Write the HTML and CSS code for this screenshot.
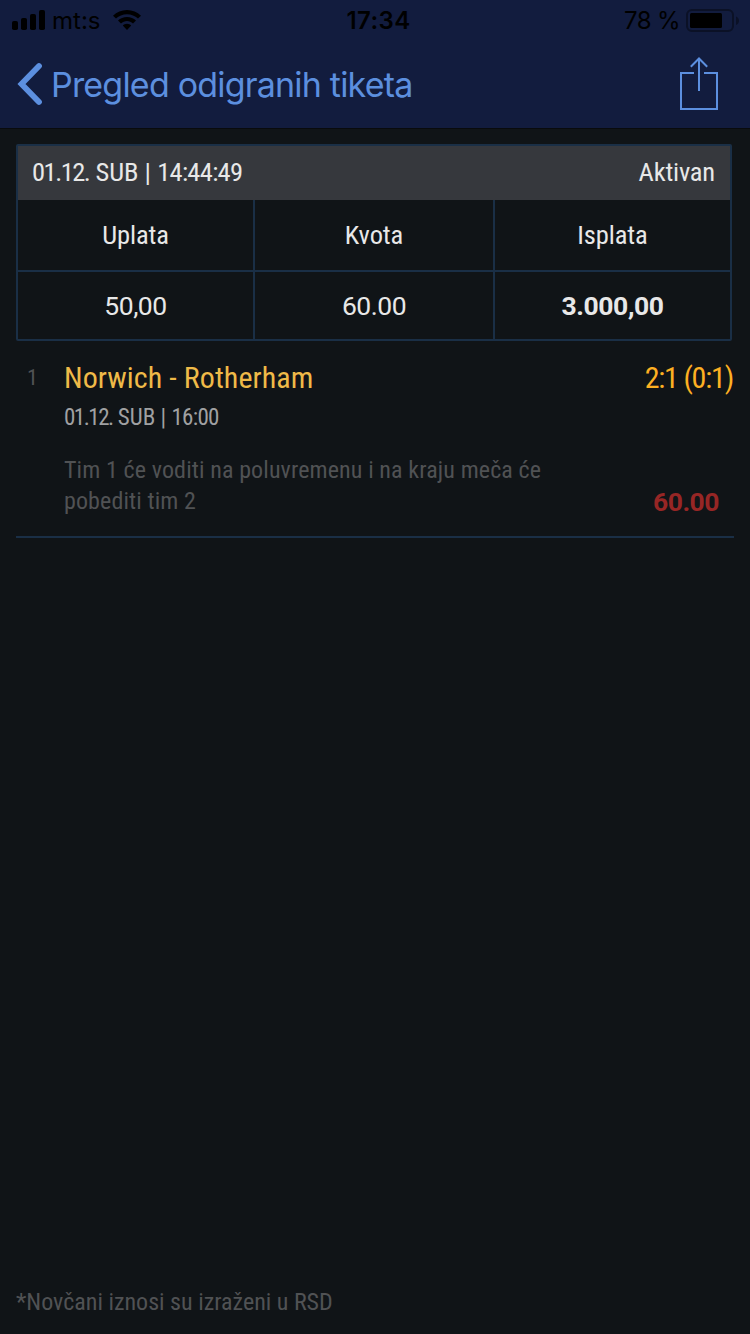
FILE: index.html
```html
<!DOCTYPE html>
<html lang="sr">
<head>
<meta charset="utf-8">
<title>Pregled odigranih tiketa</title>
<link rel="stylesheet" href="styles.css">
</head>
<body>
<div class="screen">
  <header class="topbar">
    <div class="status">
      <div class="status-left">
        <svg class="signal" width="34" height="22" viewBox="0 0 34 22"><rect x="0" y="12" width="6" height="9" rx="1.8"/><rect x="9" y="9" width="6" height="12" rx="1.8"/><rect x="18" y="5" width="6" height="16" rx="1.8"/><rect x="27" y="1" width="6" height="20" rx="1.8"/></svg>
        <span class="carrier">mt:s</span>
        <svg class="wifi" width="28" height="20" viewBox="0 0 28 20"><path d="M14 0C8.600 0 3.700 2.200 0 5.700L3 8.600C5.900 5.900 9.700 4.200 14 4.200S22.100 5.900 25 8.600L28 5.700C24.300 2.200 19.400 0 14 0Z"/><path d="M14 7C10.500 7 7.300 8.400 5 10.600L8 13.500C9.600 12 11.700 11.100 14 11.100S18.400 12 20 13.500L23 10.600C20.700 8.400 17.500 7 14 7Z"/><path d="M14 13.800C12.200 13.800 10.900 14.500 9.800 15.500L14 20L18.200 15.500C17.100 14.500 15.800 13.800 14 13.800Z"/></svg>
      </div>
      <span class="clock">17:34</span>
      <div class="status-right">
        <span class="percent">78 %</span>
        <svg class="battery" width="54" height="24" viewBox="0 0 54 24"><rect x="1" y="1" width="46" height="21" rx="5" fill="none" stroke="#0b1126" stroke-width="2"/><rect x="4" y="4" width="32" height="15" rx="1.500"/><path d="M50 7.500C54 9 54 14.500 50 16Z" fill="#0b1126"/></svg>
      </div>
    </div>
    <nav class="nav">
      <a class="back">
        <svg class="chevron" width="26" height="44" viewBox="0 0 26 44"><path d="M22 4L4.500 22L22 40" fill="none" stroke="#5c8fdf" stroke-width="5.800" stroke-linecap="round" stroke-linejoin="miter"/></svg>
        <span class="title">Pregled odigranih tiketa</span>
      </a>
      <svg class="share" width="40" height="54" viewBox="0 0 40 54"><path d="M15 16H2V52H38V16H25M20 34V2.500M11.800 9.700L20 1.500L28.200 9.700" fill="none" stroke="#5c8fdf" stroke-width="2"/></svg>
    </nav>
  </header>

  <main class="content">
    <section class="ticket">
      <div class="ticket-head"><span class="stamp"><span class="day">01.12.</span> SUB | <span class="time">14:44:49</span></span><span class="state">Aktivan</span></div>
      <div class="grid">
        <div class="cell label">Uplata</div>
        <div class="cell label">Kvota</div>
        <div class="cell label">Isplata</div>
        <div class="cell">50,00</div>
        <div class="cell">60.00</div>
        <div class="cell payout">3.000,00</div>
      </div>
    </section>

    <section class="match">
      <span class="index">1</span>
      <div class="match-body">
        <div class="match-row"><span class="teams">Norwich - Rotherham</span><span class="score">2:1 (0:1)</span></div>
        <div class="kickoff"><span class="day">01.12.</span> SUB | <span class="time">16:00</span></div>
        <div class="bet-row">
          <p class="bet">Tim 1 će voditi na poluvremenu i na kraju meča će<br>pobediti tim 2</p>
          <span class="odds">60.00</span>
        </div>
      </div>
    </section>
  </main>

  <footer class="note">*Novčani iznosi su izraženi u RSD</footer>
</div>
</body>
</html>
```

FILE: styles.css
```css
* { box-sizing: border-box; }

body {
  margin: 0;
  background: #101417;
  color: #e8e8e8;
  font-family: Roboto, "Liberation Sans", sans-serif;
  font-size: 26.5px;
  font-stretch: 75%;
}

.screen {
  display: flex;
  flex-direction: column;
  width: 750px;
  height: 1334px;
}

.topbar {
  height: 129px;
  background: #121c3e;
  border-bottom: 1px solid #090b0d;
  font-family: Inter, "Liberation Sans", sans-serif;
  font-stretch: normal;
}

.status {
  display: grid;
  grid-template-columns: 1fr auto 1fr;
  align-items: center;
  height: 40px;
  padding: 1px 10px 0 12px;
  color: #000;
  font-size: 24px;
}

.status-left, .status-right { display: flex; align-items: center; }
.status-right { justify-content: flex-end; }
.signal { margin-top: -2px; }
.carrier { margin-left: 6px; }
.wifi { margin: -1px 0 0 13px; }
.clock { padding-left: 5px; font-weight: 600; letter-spacing: 0.4px; }
.percent { margin-right: 6px; letter-spacing: -0.6px; }

.nav {
  display: flex;
  justify-content: space-between;
  align-items: center;
  height: 88px;
  padding: 0 31px 0 17px;
}

.back { display: flex; align-items: center; gap: 8px; }
.title { color: #5c8fdf; font-size: 34px; letter-spacing: -0.8px; }

.content { flex: 1; padding: 15px 16px 0; }

.ticket {
  width: 716px;
  border: 2px solid #1a2f46;
  border-radius: 2px;
}

.ticket-head {
  display: flex;
  justify-content: space-between;
  height: 54px;
  padding: 0 15px 0 14px;
  background: #36383d;
  line-height: 52px;
}

.day { letter-spacing: -1.5px; }
.time { letter-spacing: -0.7px; }
.state { letter-spacing: -0.2px; }

.grid {
  display: grid;
  grid-template-columns: 235px 238px 235px;
  grid-template-rows: 70px 67px;
  gap: 2px;
  background: #1a2f46;
}

.cell {
  background: #101417;
  font-stretch: 100%;
  letter-spacing: -0.5px;
  line-height: 68px;
  text-align: center;
}
.label { font-stretch: 75%; letter-spacing: -0.1px; line-height: 70px; }
.payout { font-weight: 700; letter-spacing: -0.4px; }

.match {
  display: flex;
  width: 718px;
  height: 197px;
  padding-top: 16px;
  border-bottom: 2px solid #1a2f46;
}

.index { width: 48px; padding-left: 11px; color: #505254; font-size: 22px; line-height: 42px; }
.match-body { flex: 1; }
.match-row { display: flex; justify-content: space-between; font-size: 30px; line-height: 42px; }
.teams { color: #efba48; letter-spacing: 0.08px; }
.score { padding-right: 1px; color: #fdb022; letter-spacing: -1.2px; }
.kickoff { color: #a0a1a2; font-size: 23px; line-height: 38px; }
.bet-row { display: flex; justify-content: space-between; align-items: flex-end; padding-top: 18px; padding-right: 15px; }
.bet { margin: 0; color: #505254; font-size: 24px; line-height: 31px; letter-spacing: 0.11px; }
.odds { color: #972625; font-weight: 700; font-stretch: 100%; letter-spacing: -0.5px; line-height: 31px; }

.note { height: 49px; padding: 0 16px; color: #505254; font-size: 24px; line-height: 34px; }
```
